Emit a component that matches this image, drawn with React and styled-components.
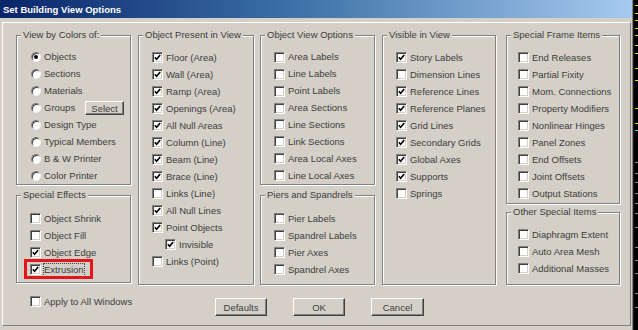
import React from "react";
import styled, { createGlobalStyle } from "styled-components";

const GlobalStyle = createGlobalStyle`
  html, body { margin: 0; padding: 0; background: #000; }
  body { width: 638px; height: 330px; overflow: hidden; font-family: "Liberation Sans", Arial, sans-serif; }
`;

const TEXT = "#3c3c3c";

const Screen = styled.div`
  display: flex;
  width: 638px;
  height: 330px;
`;

const Dialog = styled.div`
  width: 633px;
  height: 330px;
  box-sizing: border-box;
  background: #d4d0c8;
  border-right: 1px solid #808080;
  display: flex;
  flex-direction: column;
`;

const TitleBar = styled.div`
  height: 18px;
  flex: none;
  background: linear-gradient(to right, #0a246a 0%, #3a6ea5 45%, #a6caf0 100%);
  color: #fff;
  font: bold 9.5px "Liberation Sans", Arial, sans-serif;
  display: flex;
  align-items: center;
  padding-left: 3px;
`;

const Frame = styled.div`
  flex: 1;
  margin: 4px 1px 4px 2px;
  border-top: 1px solid #fff;
  border-left: 1px solid #fff;
  border-right: 1px solid #808080;
  border-bottom: 1px solid #808080;
  display: flex;
  flex-direction: column;
`;

const Columns = styled.div`
  display: flex;
  align-items: flex-start;
  padding: 12px 0 0 13px;
`;

const Column = styled.div`
  display: flex;
  flex-direction: column;
  width: ${(p) => p.$w}px;
  margin-left: ${(p) => p.$ml || 0}px;
  gap: ${(p) => p.$gap || 10}px;
`;

const Group = styled.div`
  position: relative;
  box-sizing: border-box;
  height: ${(p) => p.$h}px;
  border: 1px solid #808080;
  box-shadow: inset 1px 1px 0 #fff, 1px 1px 0 #fff;
  padding: ${(p) => p.$pt || 13}px 0 0 ${(p) => p.$pl || 13}px;
  display: flex;
  flex-direction: column;
`;

const Legend = styled.span`
  position: absolute;
  top: -7px;
  left: 4px;
  padding: 0 2px;
  background: #d4d0c8;
  font-size: 9.5px;
  line-height: 12px;
  color: ${TEXT};
  white-space: nowrap;
`;

const Row = styled.div`
  position: relative;
  display: flex;
  align-items: center;
  height: 17px;
  margin-left: ${(p) => p.$indent || 0}px;
  width: ${(p) => (p.$fit ? "fit-content" : "auto")};
  ${(p) =>
    p.$highlight &&
    `&::after {
      content: "";
      position: absolute;
      left: -6px;
      right: -8px;
      top: -2px;
      bottom: -1px;
      border: 3px solid #e8141c;
    }`}
`;

const Box = styled.span`
  flex: none;
  box-sizing: border-box;
  width: 11px;
  height: 11px;
  background: #fff;
  border: 1px solid;
  border-color: #808080 #fff #fff #808080;
  box-shadow: inset 1px 1px 0 #404040, inset -1px -1px 0 #d4d0c8;
  display: flex;
  align-items: center;
  justify-content: center;
`;

const Radio = styled.span`
  flex: none;
  box-sizing: border-box;
  width: 10px;
  height: 10px;
  margin-left: 1px;
  border-radius: 50%;
  background: #fff;
  border: 1px solid;
  border-color: #808080 #f4f4f4 #f4f4f4 #808080;
  box-shadow: inset 1px 1px 0 #404040;
  display: flex;
  align-items: center;
  justify-content: center;
  &::after {
    content: "";
    width: 4px;
    height: 4px;
    border-radius: 50%;
    background: ${(p) => (p.$on ? "#000" : "transparent")};
  }
`;

const Label = styled.span`
  margin-left: ${(p) => (p.$focus ? 2 : 3)}px;
  font-size: 9.5px;
  line-height: 12px;
  color: ${TEXT};
  white-space: nowrap;
  border: ${(p) => (p.$focus ? "1px dotted #444" : "none")};
`;

const SmallButton = styled.button`
  margin-left: auto;
  margin-right: 6px;
  width: 39px;
  height: 14px;
  padding: 0;
  box-sizing: border-box;
  background: #d4d0c8;
  border: 1px solid;
  border-color: #fff #404040 #404040 #fff;
  box-shadow: inset -1px -1px 0 #808080;
  font: 9.5px "Liberation Sans", Arial, sans-serif;
  color: ${TEXT};
`;

const Footer = styled.div`
  display: flex;
  align-items: flex-start;
  padding-left: 27px;
`;

const ApplyCell = styled.div`
  width: 185px;
  margin-top: 8px;
`;

const ButtonBar = styled.div`
  display: flex;
  gap: 26px;
  margin-top: 13px;
`;

const Button = styled.button`
  width: ${(p) => p.$w || 52}px;
  height: 18px;
  padding: 0;
  box-sizing: border-box;
  background: #d4d0c8;
  border: 1px solid;
  border-color: #fff #404040 #404040 #fff;
  box-shadow: inset -1px -1px 0 #808080;
  font: 9.5px "Liberation Sans", Arial, sans-serif;
  color: ${TEXT};
`;

const Check = () => (
  <svg width="7" height="7" viewBox="0 0 7 7">
    <path d="M0.8 3.2 L2.6 5.2 L6.2 1" stroke="#000" strokeWidth="1.6" fill="none" />
  </svg>
);

const CheckItem = ({ label, on, indent, highlight, focus }) => (
  <Row $indent={indent} $highlight={highlight} $fit={highlight}>
    <Box>{on && <Check />}</Box>
    <Label $focus={focus}>{label}</Label>
  </Row>
);

const RadioItem = ({ label, on, children }) => (
  <Row>
    <Radio $on={on} />
    <Label>{label}</Label>
    {children}
  </Row>
);

const Strip = styled.svg`
  flex: none;
  display: block;
`;

const ticks = [
  [5, "#e8e000"], [13, "#e8e000"], [20, "#e8e000"], [28, "#e8e000"], [35, "#e8e000"],
  [45, "#e8e000"], [53, "#e8e000"], [68, "#e8e000"], [80, "#e8e000"], [108, "#e8e000"],
  [123, "#e8e000"], [130, "#20d0e0"], [162, "#888"], [173, "#888"], [182, "#888"],
  [193, "#888"], [203, "#888"], [213, "#888"], [227, "#888"], [247, "#888"],
  [260, "#888"], [273, "#888"], [293, "#888"], [307, "#888"],
];

export default function App() {
  return (
    <>
      <GlobalStyle />
      <Screen>
        <Dialog>
          <TitleBar>Set Building View Options</TitleBar>
          <Frame>
            <Columns>
              <Column $w={115}>
                <Group $h={150}>
                  <Legend>View by Colors of:</Legend>
                  <RadioItem label="Objects" on />
                  <RadioItem label="Sections" />
                  <RadioItem label="Materials" />
                  <RadioItem label="Groups">
                    <SmallButton>Select</SmallButton>
                  </RadioItem>
                  <RadioItem label="Design Type" />
                  <RadioItem label="Typical Members" />
                  <RadioItem label="B & W Printer" />
                  <RadioItem label="Color Printer" />
                </Group>
                <Group $h={88} $pt={14}>
                  <Legend>Special Effects</Legend>
                  <CheckItem label="Object Shrink" />
                  <CheckItem label="Object Fill" />
                  <CheckItem label="Object Edge" on />
                  <CheckItem label="Extrusion" on highlight focus />
                </Group>
              </Column>
              <Column $w={116} $ml={7}>
                <Group $h={250}>
                  <Legend>Object Present in View</Legend>
                  <CheckItem label="Floor (Area)" on />
                  <CheckItem label="Wall (Area)" on />
                  <CheckItem label="Ramp (Area)" on />
                  <CheckItem label="Openings (Area)" on />
                  <CheckItem label="All Null Areas" on />
                  <CheckItem label="Column (Line)" on />
                  <CheckItem label="Beam (Line)" on />
                  <CheckItem label="Brace (Line)" on />
                  <CheckItem label="Links (Line)" />
                  <CheckItem label="All Null Lines" on />
                  <CheckItem label="Point Objects" on />
                  <CheckItem label="Invisible" on indent={13} />
                  <CheckItem label="Links (Point)" />
                </Group>
              </Column>
              <Column $w={115} $ml={6}>
                <Group $h={150}>
                  <Legend>Object View Options</Legend>
                  <CheckItem label="Area Labels" />
                  <CheckItem label="Line Labels" />
                  <CheckItem label="Point Labels" />
                  <CheckItem label="Area Sections" />
                  <CheckItem label="Line Sections" />
                  <CheckItem label="Link Sections" />
                  <CheckItem label="Area Local Axes" />
                  <CheckItem label="Line Local Axes" />
                </Group>
                <Group $h={90} $pt={14}>
                  <Legend>Piers and Spandrels</Legend>
                  <CheckItem label="Pier Labels" />
                  <CheckItem label="Spandrel Labels" />
                  <CheckItem label="Pier Axes" />
                  <CheckItem label="Spandrel Axes" />
                </Group>
              </Column>
              <Column $w={114} $ml={7}>
                <Group $h={250}>
                  <Legend>Visible in View</Legend>
                  <CheckItem label="Story Labels" on />
                  <CheckItem label="Dimension Lines" />
                  <CheckItem label="Reference Lines" on />
                  <CheckItem label="Reference Planes" on />
                  <CheckItem label="Grid Lines" on />
                  <CheckItem label="Secondary Grids" on />
                  <CheckItem label="Global Axes" on />
                  <CheckItem label="Supports" on />
                  <CheckItem label="Springs" />
                </Group>
              </Column>
              <Column $w={114} $ml={10} $gap={8}>
                <Group $h={169} $pl={11}>
                  <Legend>Special Frame Items</Legend>
                  <CheckItem label="End Releases" />
                  <CheckItem label="Partial Fixity" />
                  <CheckItem label="Mom. Connections" />
                  <CheckItem label="Property Modifiers" />
                  <CheckItem label="Nonlinear Hinges" />
                  <CheckItem label="Panel Zones" />
                  <CheckItem label="End Offsets" />
                  <CheckItem label="Joint Offsets" />
                  <CheckItem label="Output Stations" />
                </Group>
                <Group $h={73} $pl={11}>
                  <Legend>Other Special Items</Legend>
                  <CheckItem label="Diaphragm Extent" />
                  <CheckItem label="Auto Area Mesh" />
                  <CheckItem label="Additional Masses" />
                </Group>
              </Column>
            </Columns>
            <Footer>
              <ApplyCell>
                <CheckItem label="Apply to All Windows" />
              </ApplyCell>
              <ButtonBar>
                <Button>Defaults</Button>
                <Button>OK</Button>
                <Button $w={53}>Cancel</Button>
              </ButtonBar>
            </Footer>
          </Frame>
        </Dialog>
        <Strip width="5" height="330" viewBox="0 0 5 330">
          <rect x="0" y="0" width="5" height="330" fill="#000" />
          <rect x="0" y="0" width="1" height="330" fill="#1a1a1a" />
          {ticks.map(([y, c]) => (
            <rect key={y} x="2" y={y} width="3" height="1" fill={c} />
          ))}
        </Strip>
      </Screen>
    </>
  );
}
